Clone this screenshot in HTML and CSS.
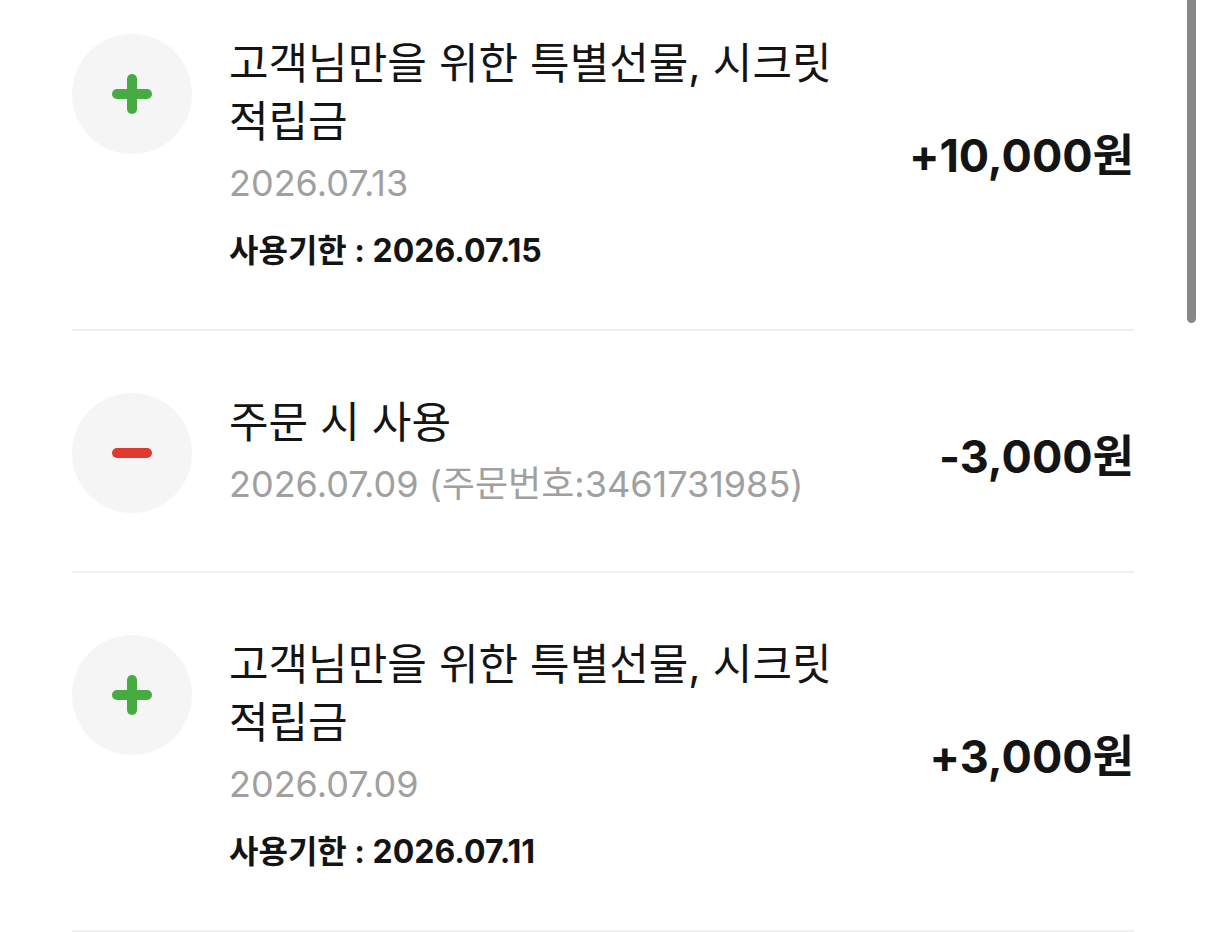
FILE: index.html
```html
<!DOCTYPE html>
<html lang="ko">
<head>
  <meta charset="UTF-8">
  <meta name="viewport" content="width=device-width, initial-scale=1.0">
  <title>적립금 내역</title>
  <link rel="stylesheet" href="styles.css">
</head>
<body>
  <ul class="point-history">
    <li class="history-item">
      <div class="history-icon plus"></div>
      <div class="history-info">
        <p class="history-title">고객님만을 위한 특별선물, 시크릿 적립금</p>
        <p class="history-date">2026.07.13</p>
        <p class="history-expire">사용기한 : 2026.07.15</p>
      </div>
      <div class="history-amount">+10,000원</div>
    </li>
    <li class="history-item">
      <div class="history-icon minus"></div>
      <div class="history-info">
        <p class="history-title">주문 시 사용</p>
        <p class="history-date">2026.07.09 (주문번호:3461731985)</p>
      </div>
      <div class="history-amount">-3,000원</div>
    </li>
    <li class="history-item">
      <div class="history-icon plus"></div>
      <div class="history-info">
        <p class="history-title">고객님만을 위한 특별선물, 시크릿 적립금</p>
        <p class="history-date">2026.07.09</p>
        <p class="history-expire">사용기한 : 2026.07.11</p>
      </div>
      <div class="history-amount">+3,000원</div>
    </li>
  </ul>

  <div class="scroll-thumb"></div>
</body>
</html>
```

FILE: styles.css
```css
body {
  font-family: Inter, "Noto Sans CJK KR", sans-serif;
  background-color: #fff;
  color: #141414;
  margin: 0;
  padding: 0 72px;
  overflow: hidden;
}

p {
  margin: 0;
}

.point-history {
  list-style: none;
  margin: 0;
  padding: 0;
}

.history-item {
  display: flex;
  align-items: flex-start;
  gap: 37px;
  padding: 62px 0 58px;
  border-bottom: 2px solid #f0f0f0;
}

.history-item:first-child {
  padding-top: 34px;
}

/* round grey badge with a plus or minus bar */
.history-icon {
  position: relative;
  flex: 0 0 120px;
  height: 120px;
  border-radius: 50%;
  background-color: #f5f5f6;
}

.history-icon::before,
.history-icon::after {
  content: "";
  position: absolute;
  left: 50%;
  top: 50%;
  border-radius: 5px;
}

.history-icon.plus::before {
  width: 40px;
  height: 10px;
  margin: -5px 0 0 -20px;
  background-color: #46ac41;
}

.history-icon.plus::after {
  width: 10px;
  height: 40px;
  margin: -20px 0 0 -5px;
  background-color: #46ac41;
}

.history-icon.minus::before {
  width: 40px;
  height: 10px;
  margin: -5px 0 0 -20px;
  background-color: #e0392d;
}

.history-info {
  flex: 1;
  min-width: 0;
}

.history-title {
  max-width: 640px;
  font-size: 43px;
  line-height: 58px;
  color: #141414;
  word-break: keep-all;
}

.history-date {
  margin-top: 8px;
  font-size: 36px;
  line-height: 50px;
  color: #a0a0a0;
}

.history-expire {
  margin-top: 23px;
  font-size: 32px;
  font-weight: 700;
  line-height: 40px;
}

.history-amount {
  align-self: center;
  font-size: 45px;
  font-weight: 700;
  color: #141414;
  white-space: nowrap;
}

.scroll-thumb {
  position: fixed;
  top: 0;
  right: 10px;
  width: 9px;
  height: 323px;
  border-radius: 0 0 5px 5px;
  background-color: #888;
}
```
